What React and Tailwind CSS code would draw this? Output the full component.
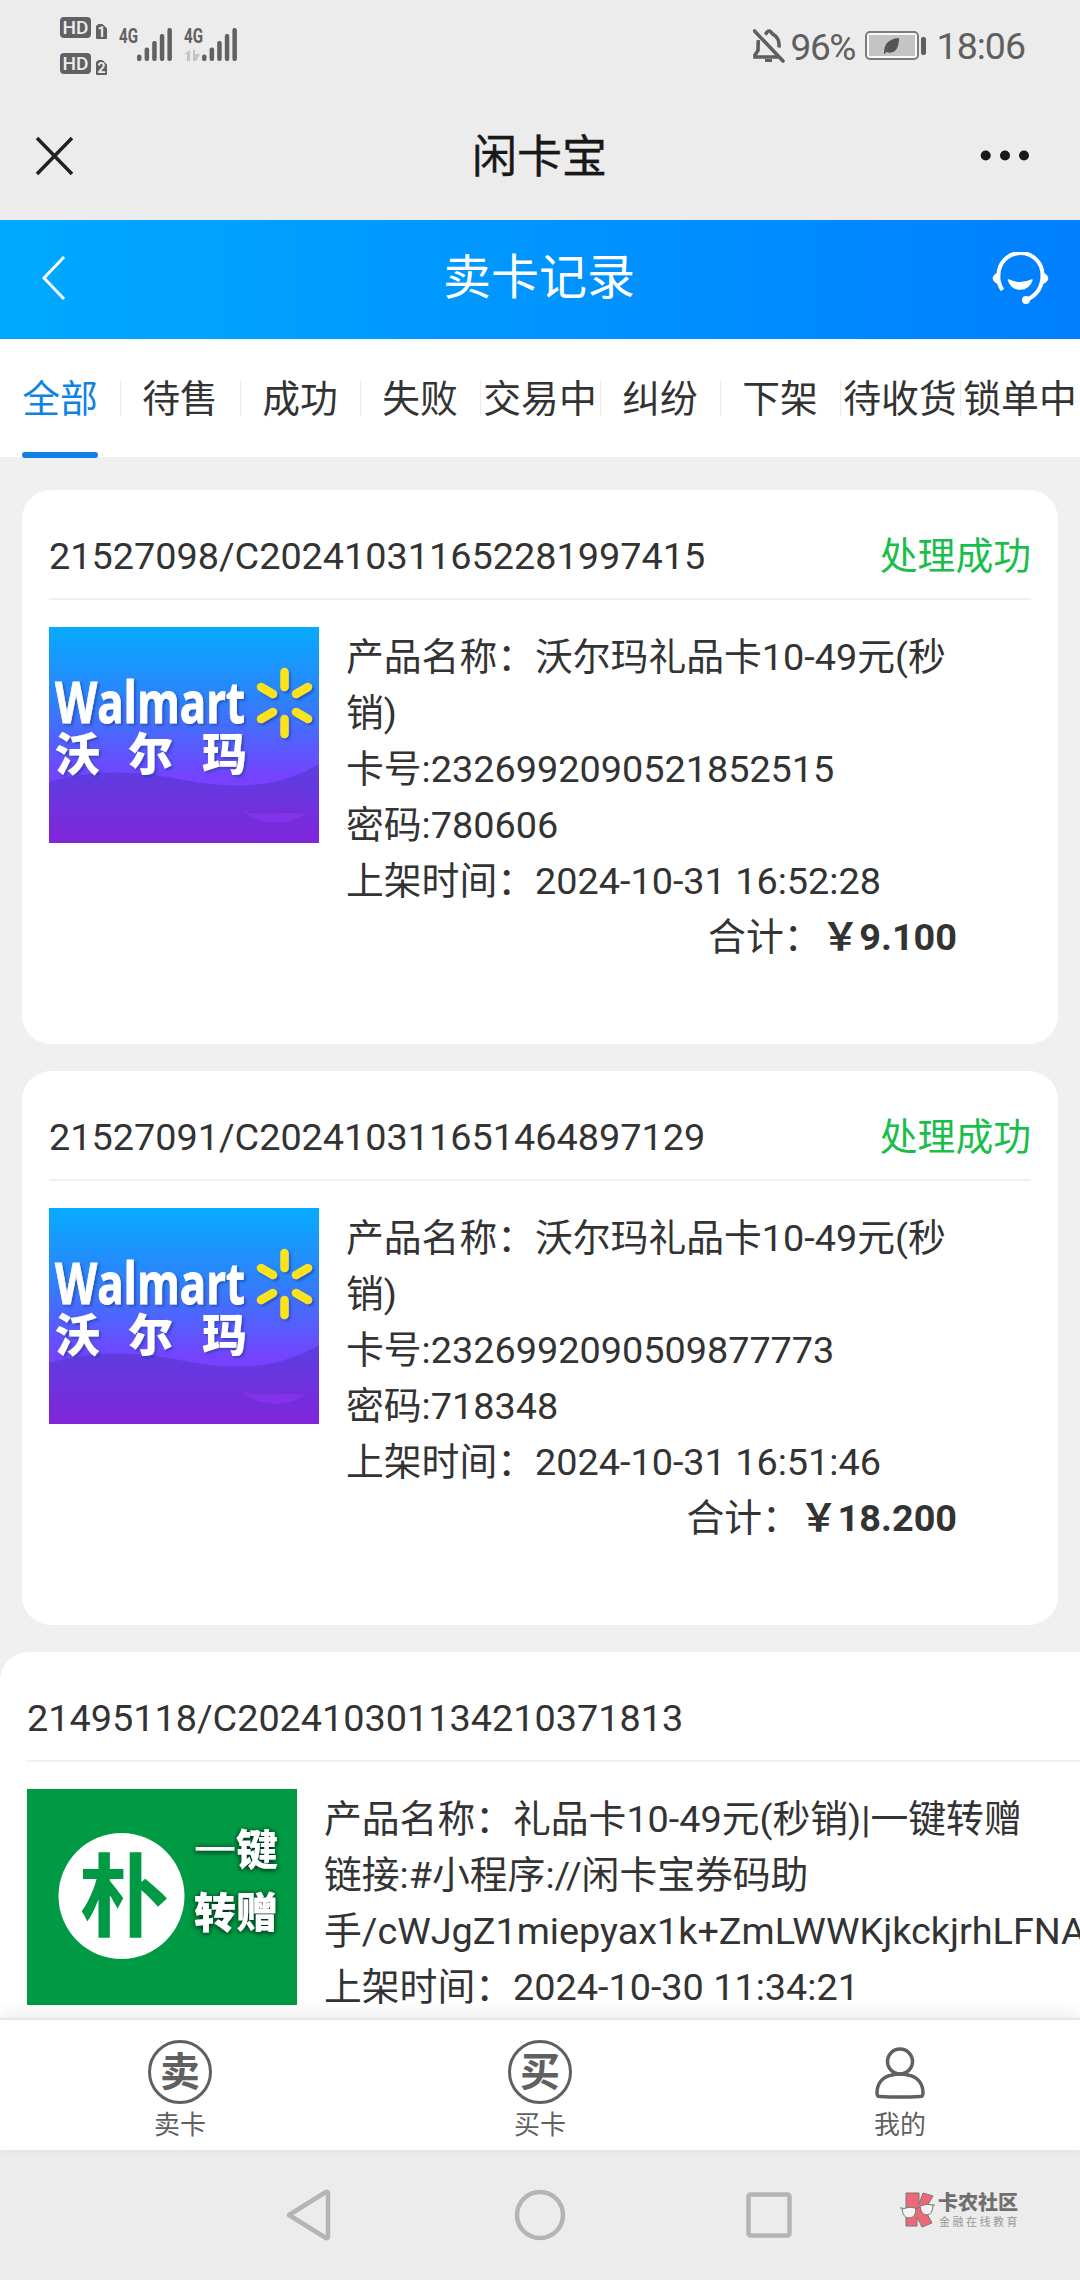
import clsx from 'clsx';

const TABS = ['全部', '待售', '成功', '失败', '交易中', '纠纷', '下架', '待收货', '锁单中'];

const ORDERS = [
  {
    id: '21527098/C202410311652281997415',
    status: '处理成功',
    cover: 'walmart',
    lines: [
      '产品名称：沃尔玛礼品卡10-49元(秒销)',
      '卡号:2326992090521852515',
      '密码:780606',
      '上架时间：2024-10-31 16:52:28',
    ],
    total: '￥9.100',
  },
  {
    id: '21527091/C202410311651464897129',
    status: '处理成功',
    cover: 'walmart',
    lines: [
      '产品名称：沃尔玛礼品卡10-49元(秒销)',
      '卡号:2326992090509877773',
      '密码:718348',
      '上架时间：2024-10-31 16:51:46',
    ],
    total: '￥18.200',
  },
];

const WIDE_ORDER = {
  id: '21495118/C202410301134210371813',
  cover: 'pupu',
  lines: [
    '产品名称：礼品卡10-49元(秒销)|一键转赠',
    '链接:#小程序://闲卡宝券码助',
    '手/cWJgZ1miepyax1k+ZmLWWKjkckjrhLFNA',
    '上架时间：2024-10-30 11:34:21',
  ],
};

export default function App() {
  return (
    <div className="flex h-[2280px] w-[1080px] flex-col overflow-hidden bg-[#f0f0f0] font-[Roboto,'Noto_Sans_CJK_SC',sans-serif] text-[37.8px] text-[#333]">
      <StatusBar />
      <WebviewHeader />
      <PageHeader />
      <Tabs />
      <main className="flex min-h-0 flex-1 flex-col gap-[27px] overflow-hidden pt-[33px]">
        {ORDERS.map((order) => (
          <OrderCard key={order.id} order={order} />
        ))}
        <OrderCard order={WIDE_ORDER} wide />
      </main>
      <BottomBar />
      <SystemNav />
    </div>
  );
}

function StatusBar() {
  return (
    <div className="flex h-[92px] shrink-0 items-start justify-between bg-[#ececec] pt-[16px] pr-[55px] pl-[59px] text-[#5f5f5f]">
      <svg width="180" height="64" viewBox="59 16 180 64" fill="#616161">
        <HdBadge y={17} sim="1" />
        <HdBadge y={53} sim="2" />
        <Signal x={119} />
        <Signal x={184} />
        <path d="M190 50v11h-3v-7h-3zM193 61V50h2v4h5l-4 7z" fill="#c4c4c4" />
      </svg>
      <div className="flex h-[60px] items-center">
        <svg width="32" height="36" viewBox="0 0 32 36" fill="none" stroke="currentColor" strokeWidth="3.6">
          <path d="M5.500 12c-.5 3-.5 6-.5 10.500L2 27v2h23M12 6.500c1-1 2-1.500 2-2.500a2.500 2.500 0 0 1 4 0c0 1 1 1.500 2.500 2.500 5 3 6 8 5.500 13" />
          <path d="M1.500 3 30 33" strokeLinecap="round" />
          <path d="M12 32.500h7" strokeWidth="3" />
        </svg>
        <span className="mt-[2px] ml-[6px] w-[74px] text-[37px] leading-none tracking-[-1.500px]">96%</span>
        <svg width="62" height="32" viewBox="0 0 62 32">
          <rect x="1" y="2" width="52" height="27" rx="4" fill="#fafafa" stroke="#7c7c7c" strokeWidth="2" />
          <rect x="4" y="5" width="46" height="21" fill="#c4c4c4" />
          <path d="M19 24c0-9 3-15 15-16 0 9-3 17-13 14l-1 2zM21 20c2-3 4-4 6-5-3 2-4 3-6 5z" fill="#555" />
          <rect x="56" y="7" width="5" height="18" rx="2" fill="#5f5f5f" />
        </svg>
        <span className="mt-[2px] ml-[10px] text-[37.500px] leading-none tracking-[-1px]">18:06</span>
      </div>
    </div>
  );
}

function HdBadge({ y, sim }) {
  return (
    <g>
      <rect x="60" y={y} width="31" height="21" rx="4" />
      <text x="75.500" y={y + 17} textAnchor="middle" textLength="26" lengthAdjust="spacingAndGlyphs" fontSize="19" fontWeight="500" fill="#ececec">
        HD
      </text>
      <path d={`M96.500 ${y + 9}l2-1.500h4l4 4v10h-10z`} strokeLinejoin="round" stroke="#616161" />
      <text x="101.500" y={y + 20} textAnchor="middle" fontSize="14" fontWeight="700" fill="#ececec">
        {sim}
      </text>
    </g>
  );
}

function Signal({ x }) {
  const tops = [54.5, 47.5, 41, 34, 28];
  return (
    <g>
      <text x={x} y="43" fontSize="21" fontWeight="700" textLength="19" lengthAdjust="spacingAndGlyphs">
        4G
      </text>
      {tops.map((top, i) => (
        <rect key={top} x={x + 18 + i * 7.6} y={top} width="4.500" height={61 - top} rx="2" />
      ))}
    </g>
  );
}

function WebviewHeader() {
  return (
    <div className="flex h-[128px] shrink-0 items-center justify-between bg-[#ececec] px-[35px]">
      <svg width="64" height="40" viewBox="0 0 64 40" stroke="#222" strokeWidth="3.500">
        <path d="M2 2l35 36M37 2 2 38" />
      </svg>
      <h1 className="pt-[3px] text-[45px] leading-none font-normal text-[#181818] [-webkit-text-stroke:0.4px]">闲卡宝</h1>
      <svg width="65" height="12" viewBox="0 0 65 12" fill="#181818">
        <circle cx="5.700" cy="5.500" r="5" />
        <circle cx="25" cy="5.500" r="5" />
        <circle cx="44" cy="5.500" r="5" />
      </svg>
    </div>
  );
}

function PageHeader() {
  return (
    <header className="flex h-[119px] shrink-0 items-center justify-between bg-linear-to-r from-[#00a9ff] to-[#007fff] pr-[31px] pb-[3px] pl-[41px] text-white">
      <svg width="45" height="46" viewBox="0 0 45 46" fill="none" stroke="currentColor" strokeWidth="3">
        <path d="M23 2 3 23l20 21" />
      </svg>
      <h2 className="text-[48px] leading-none">卖卡记录</h2>
      <svg width="57" height="52" viewBox="0 0 57 52" fill="none" stroke="currentColor" strokeWidth="4">
        <path d="M10.500 38A22 22 0 0 1 6.500 23a22 22 0 0 1 44 0c0 12-6 20-15 24.500" />
        <path d="M6 20c-8 5-7 9 3 14zM51 20c8 5 7 9-3 14z" fill="currentColor" stroke="none" />
        <path d="M16.500 28c8 4 15 4 23.500 0-4 12-19.500 12-23.500 0z" fill="currentColor" stroke="currentColor" strokeWidth="1.500" strokeLinejoin="round" />
        <circle cx="34" cy="48" r="4" fill="currentColor" stroke="none" />
      </svg>
    </header>
  );
}

function Tabs() {
  return (
    <nav className="grid h-[118px] shrink-0 grid-cols-9 bg-white">
      {TABS.map((tab, i) => (
        <div key={tab} className="relative flex items-center justify-center">
          <span className={clsx('pt-[3px] leading-none whitespace-nowrap', i === 0 && 'text-[#1182e4]')}>{tab}</span>
          {i === 0 && <span className="absolute bottom-[-1px] h-[6px] w-[76px] rounded-full bg-[#1182e4]" />}
          {i < TABS.length - 1 && <span className="absolute right-[-1px] h-[37px] w-px bg-[#ececec]" />}
        </div>
      ))}
    </nav>
  );
}

function OrderCard({ order, wide }) {
  return (
    <section
      className={clsx(
        'h-[554px] shrink-0 rounded-[29px] bg-white px-[27px]',
        wide ? 'w-[1160px]' : 'mx-[22px]'
      )}
    >
      <div className="flex h-[110px] items-center justify-between border-b-2 border-[#f0f0f0] pt-[24px]">
        <span>{order.id}</span>
        <span className="text-[#19be4b]">{order.status}</span>
      </div>
      <div className="flex gap-[27px] pt-[27px]">
        {order.cover === 'walmart' ? <WalmartCover /> : <PupuCover />}
        <div className={clsx('pt-[2px] leading-[56px]', wide ? 'whitespace-nowrap' : 'w-[611px]')}>
          {order.lines.map((line) => (
            <p key={line}>{line}</p>
          ))}
          {order.total && (
            <p className="text-right">
              合计：<b className="font-bold">{order.total}</b>
            </p>
          )}
        </div>
      </div>
    </section>
  );
}

function WalmartCover() {
  return (
    <svg width="270" height="216" viewBox="0 0 270 216" className="shrink-0">
      <defs>
        <linearGradient id="sky" x1="0" y1="0" x2="0" y2="1">
          <stop offset="0" stopColor="#06abff" />
          <stop offset=".35" stopColor="#2f80fb" />
          <stop offset=".7" stopColor="#7741ff" />
        </linearGradient>
        <linearGradient id="wave" x1="0" y1="0" x2="0" y2="1">
          <stop offset="0" stopColor="#5a3fe0" />
          <stop offset="1" stopColor="#8026da" />
        </linearGradient>
        <filter id="shade" x="-10%" y="-10%" width="120%" height="130%">
          <feDropShadow dx="2" dy="2" stdDeviation="1" floodColor="#223a9c" floodOpacity=".6" />
        </filter>
      </defs>
      <rect width="270" height="216" fill="url(#sky)" />
      <path d="M0 155c50-14 90-10 130-3 60 12 100 8 140-15v79H0z" fill="url(#wave)" />
      <path d="M194 184c20 6 40 0 62 3-18 12-46 12-62-3z" fill="#8a35f2" opacity=".7" />
      <g filter="url(#shade)">
        <text
          x="6"
          y="96"
          textLength="190"
          lengthAdjust="spacingAndGlyphs"
          fill="#fff"
          stroke="#fff"
          strokeWidth=".8"
          className="font-['Open_Sans',sans-serif] text-[57px] font-bold"
        >
          Walmart
        </text>
        <g fill="#fff" className="font-['Noto_Sans_CJK_SC',sans-serif] text-[45px] font-black">
          <text x="6" y="144">沃</text>
          <text x="79" y="144">尔</text>
          <text x="153" y="144">玛</text>
        </g>
        <g stroke="#fbe31b" strokeWidth="8.500" strokeLinecap="round">
          <path d="M235.500 45v15M235.500 92v15M212 60l12 7M259 60l-12 7M212 92l12-7M259 92l-12-7" />
        </g>
      </g>
    </svg>
  );
}

function PupuCover() {
  return (
    <svg width="270" height="216" viewBox="0 0 270 216" className="shrink-0">
      <defs>
        <filter id="glow" x="-20%" y="-20%" width="140%" height="140%">
          <feDropShadow dx="0" dy="1" stdDeviation="2.500" floodColor="#00140a" floodOpacity="1" />
        </filter>
      </defs>
      <rect width="270" height="216" fill="#009944" />
      <circle cx="94.500" cy="107" r="63" fill="#fff" />
      <text x="97" y="140" textAnchor="middle" fill="#009944" className="font-['Noto_Sans_CJK_SC',sans-serif] text-[90px] font-bold">
        朴
      </text>
      <g fill="#fff" filter="url(#glow)" className="font-['Noto_Sans_CJK_SC',sans-serif] text-[42px] font-black">
        <text x="167" y="76">
          <tspan className="font-normal">一</tspan>键
        </text>
        <text x="167" y="139">转赠</text>
      </g>
    </svg>
  );
}

function BottomBar() {
  return (
    <div className="relative grid h-[132px] shrink-0 grid-cols-3 border-t-2 border-[#e6e6e6] bg-white text-[25.900px] text-[#606060] shadow-[0_-4px_16px_rgba(0,0,0,0.08)]">
      <BarItem label="卖卡">
        <CircleGlyph char="卖" />
      </BarItem>
      <BarItem label="买卡">
        <CircleGlyph char="买" />
      </BarItem>
      <BarItem label="我的">
        <svg width="52" height="64" viewBox="0 0 52 64" fill="none" stroke="currentColor" strokeWidth="3.500">
          <circle cx="26" cy="21.500" r="12.500" />
          <path d="M18 35c-10 2-15 9-15 18 0 3 1 3.500 3 3.500q20 1 40 0c2 0 3-.5 3-3.500 0-9-5-16-15-18q-8-2-16 0z" />
        </svg>
      </BarItem>
    </div>
  );
}

function BarItem({ label, children }) {
  return (
    <div className="flex flex-col items-center gap-[9px] pt-[20px] leading-none">
      {children}
      <span>{label}</span>
    </div>
  );
}

function CircleGlyph({ char }) {
  return (
    <span className="flex size-[64px] items-center justify-center rounded-full border-[3px] border-current pt-[2px] text-[40px] font-bold">
      {char}
    </span>
  );
}

function SystemNav() {
  return (
    <div className="flex h-[130px] shrink-0 items-center bg-[#ececec] pl-[286px]">
      <svg width="507" height="52" viewBox="286 2189 507 52" fill="none" stroke="#b4b4b4" strokeWidth="4.500" strokeLinejoin="round">
        <path d="M289 2215l37-23c1-.5 2 0 2 1v44c0 1-1 1.500-2 1z" />
        <circle cx="540" cy="2215" r="23" />
        <rect x="748.500" y="2194.500" width="41" height="41" rx="2" />
      </svg>
      <div className="ml-[107px] flex items-center gap-[2px] pb-[10px]">
        <svg width="36" height="37" viewBox="0 0 36 37" stroke="#777" strokeWidth="1">
          <path d="M6 1h13v11l4-11 10 3-8 14 7 13-10 4-5-10v9H6z" fill="#ec6a78" />
          <path d="M2 17q7-3 14-1 0 10-7 10-6 0-7-9zM20 14q7-3 13-1 0 9-6 10-6 0-7-9z" fill="#f3f3f3" />
          <path d="M0 16h3M15 17l5-2M32 13h3" />
        </svg>
        <div className="flex flex-col gap-[4px] leading-none text-[#707070]">
          <span className="text-[20px] font-black">卡农社区</span>
          <span className="pl-[1px] text-[11px] tracking-[2.500px] text-[#999]">金融在线教育</span>
        </div>
      </div>
    </div>
  );
}
